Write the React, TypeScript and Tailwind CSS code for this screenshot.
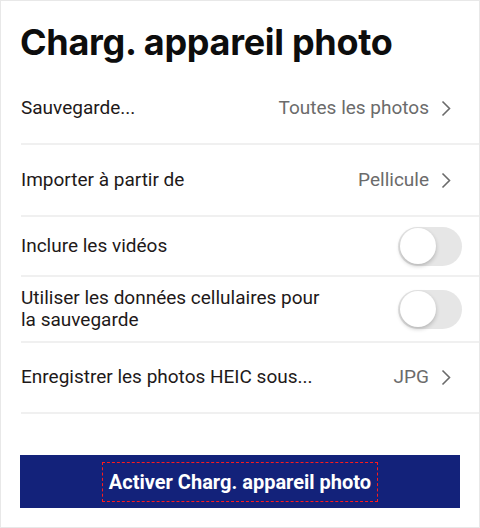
import React, { useState } from "react";

function Chevron() {
  return (
    <svg width="10" height="17" viewBox="0 0 10 17" fill="none" className="ml-3">
      <path d="M1.5 1.5L8.5 8.5L1.5 15.5" stroke="#6b6b6b" strokeWidth="1.6" />
    </svg>
  );
}

function Toggle({ on, onChange }: { on: boolean; onChange: () => void }) {
  return (
    <button
      onClick={onChange}
      className={`relative h-[39px] w-[64px] shrink-0 rounded-full ${on ? "bg-[#0061fe]" : "bg-[#e6e6e6]"}`}
    >
      <span
        className={`absolute top-[1.5px] h-[36px] w-[36px] rounded-full bg-white shadow-[0_2px_4px_rgba(0,0,0,0.22)] ${on ? "left-[26px]" : "left-[1.5px]"}`}
      />
    </button>
  );
}

function LinkRow({ label, value, h }: { label: string; value: string; h: string }) {
  return (
    <div className={`ml-[20px] flex items-center justify-between border-b-2 border-[#f0f0f0] pr-[28px] ${h}`}>
      <span className="text-[19px] text-[#1e1919]">{label}</span>
      <span className="flex items-center text-[19px] text-[#6b6b6b]">
        {value}
        <Chevron />
      </span>
    </div>
  );
}

export default function App() {
  const [videos, setVideos] = useState(false);
  const [cellular, setCellular] = useState(false);

  return (
    <div
      className="h-[528px] w-[480px] border border-[#e8e8e8] bg-white"
      style={{ fontFamily: "Roboto, 'Liberation Sans', sans-serif" }}
    >
      <div className="flex h-[71px] items-center pl-[19px] pt-[10px]">
        <h1
          className="text-[36px] font-bold tracking-[-0.3px] text-[#0d0d0d]"
          style={{ fontFamily: "Inter, 'Liberation Sans', sans-serif" }}
        >
          Charg. appareil photo
        </h1>
      </div>

      <div className="pt-[1px]">
        <LinkRow label="Sauvegarde..." value="Toutes les photos" h="h-[72px]" />
      </div>
      <LinkRow label="Importer à partir de" value="Pellicule" h="h-[72px]" />

      <div className="ml-[20px] flex h-[60px] items-center justify-between border-b-2 border-[#f0f0f0] pr-[17px]">
        <span className="text-[19px] text-[#1e1919]">Inclure les vidéos</span>
        <Toggle on={videos} onChange={() => setVideos(!videos)} />
      </div>

      <div className="ml-[20px] flex h-[66px] items-center justify-between border-b-2 border-[#f0f0f0] pr-[17px]">
        <span className="w-[318px] text-[19px] leading-[22px] text-[#1e1919]">
          Utiliser les données cellulaires pour la sauvegarde
        </span>
        <Toggle on={cellular} onChange={() => setCellular(!cellular)} />
      </div>

      <LinkRow label="Enregistrer les photos HEIC sous..." value="JPG" h="h-[71px]" />

      <div className="px-[19px] pt-[41px]">
        <button className="flex h-[53px] w-full items-center justify-center bg-[#13227a]">
          <span className="border border-dashed border-[#ff1a1a] px-[6px] py-[4px] text-[20px] font-bold text-white">
            Activer Charg. appareil photo
          </span>
        </button>
      </div>
    </div>
  );
}
